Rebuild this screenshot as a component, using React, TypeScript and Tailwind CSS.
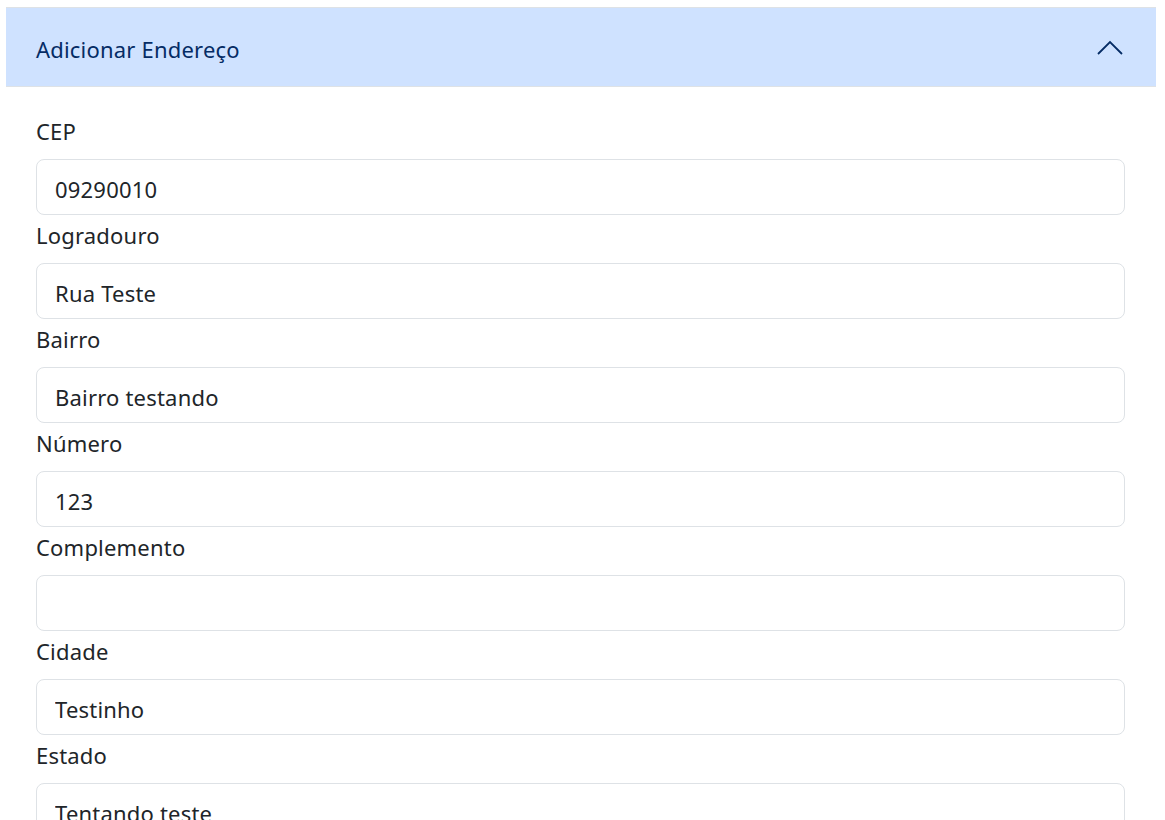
import { useState } from 'react'

const fields = [
  { label: 'CEP', value: '09290010' },
  { label: 'Logradouro', value: 'Rua Teste' },
  { label: 'Bairro', value: 'Bairro testando' },
  { label: 'Número', value: '123' },
  { label: 'Complemento', value: '' },
  { label: 'Cidade', value: 'Testinho' },
  { label: 'Estado', value: 'Tentando teste' },
]

export default function App() {
  const [open, setOpen] = useState(true)
  const [values, setValues] = useState(fields.map((f) => f.value))

  return (
    <main className="min-h-screen bg-white pt-[7px] font-['Noto_Sans',sans-serif] text-[22px] tracking-[0.2px] text-[#212529]">
      <div className="ml-[6px] w-[1150px]">
        <button
          onClick={() => setOpen(!open)}
          className="flex h-[80px] w-full items-center justify-between border-y border-[#dee2e6] bg-[#cfe2ff] pl-[30px] pr-[33px] text-left text-[#052c65]"
        >
          <span className="pt-[4px]">Adicionar Endereço</span>
          <svg width="26" height="16" viewBox="0 0 26 16" fill="none" className={open ? 'mt-[1px]' : 'mt-[1px] rotate-180'}>
            <path d="M1 14L13 2L25 14" stroke="#052c65" strokeWidth="1.8" />
          </svg>
        </button>
        {open && (
          <div className="pl-[30px] pr-[31px] pt-[24px]">
            {fields.map((f, i) => (
              <div key={f.label} className="mt-[4px]">
                <label className="mb-[14px] block pt-[1px] leading-[30px]">{f.label}</label>
                <input
                  value={values[i]}
                  onChange={(e) => setValues(values.map((v, j) => (j === i ? e.target.value : v)))}
                  className="-mt-[1px] block h-[56px] w-full rounded-[8px] border border-[#dee2e6] px-[18px] pt-[4px] text-[#212529] outline-none"
                />
              </div>
            ))}
          </div>
        )}
      </div>
    </main>
  )
}
